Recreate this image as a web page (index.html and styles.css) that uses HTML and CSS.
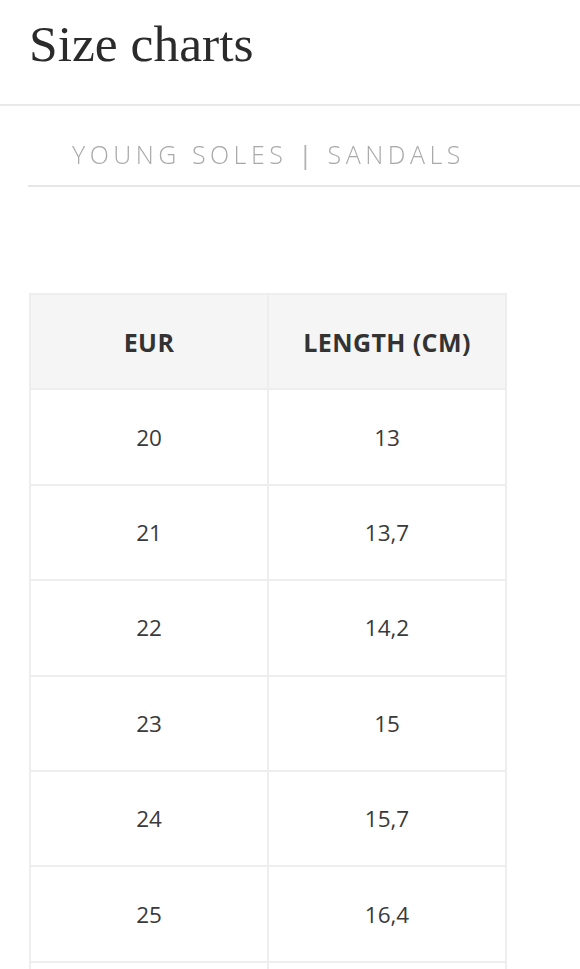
FILE: index.html
```html
<!DOCTYPE html>
<html>
<head>
<meta charset="utf-8">
<link rel="stylesheet" href="styles.css">
</head>
<body>
<header class="page-head">
  <h1 class="title">Size charts</h1>
</header>
<section class="content">
  <div class="tabs">
    <div class="tab">YOUNG SOLES <span class="sep">|</span> SANDALS</div>
  </div>
  <table class="chart">
    <thead>
      <tr><th>EUR</th><th>LENGTH (CM)</th></tr>
    </thead>
    <tbody>
      <tr><td>20</td><td>13</td></tr>
      <tr><td>21</td><td>13,7</td></tr>
      <tr><td>22</td><td>14,2</td></tr>
      <tr><td>23</td><td>15</td></tr>
      <tr><td>24</td><td>15,7</td></tr>
      <tr><td>25</td><td>16,4</td></tr>
      <tr><td></td><td></td></tr>
    </tbody>
  </table>
</section>
</body>
</html>
```
FILE: styles.css
```css
* { box-sizing: border-box; }
html, body { margin: 0; padding: 0; background: #fff; }
body { font-family: "Open Sans", "Noto Sans", sans-serif; color: #333; overflow: hidden; height: 969px; }

.page-head {
  height: 106px;
  border-bottom: 2px solid #e9e9e9;
  padding: 14px 0 0 29px;
}
.title {
  margin: 0;
  font-family: "Liberation Serif", serif;
  font-weight: 400;
  font-size: 51.5px;
  line-height: 60px;
  color: #2b2b2b;
}

.content { padding-left: 28px; }

.tabs {
  border-bottom: 2px solid #e6e6e6;
  height: 81px;
  padding: 31px 0 0 44px;
}
.tab {
  font-size: 25px;
  line-height: 34px;
  letter-spacing: 4.5px;
  color: #a9a9a9;
  font-weight: 300;
  white-space: nowrap;
  will-change: transform;
}
.tab .sep { font-weight: 400; color: #b0b0b0; }

.chart {
  margin: 106px 0 0 1px;
  border-collapse: collapse;
  width: 478px;
  table-layout: fixed;
}
.chart th, .chart td {
  border: 2px solid #eeeeee;
  height: 95.4px;
  text-align: center;
  vertical-align: middle;
  padding: 0;
  width: 50%;
}
.chart th {
  background: #f5f5f5;
  font-weight: 700;
  font-size: 25px;
  letter-spacing: 0.4px;
  color: #333;
}
.chart td {
  font-size: 22.5px;
  font-weight: 400;
  color: #3a3a3a;
}
```
